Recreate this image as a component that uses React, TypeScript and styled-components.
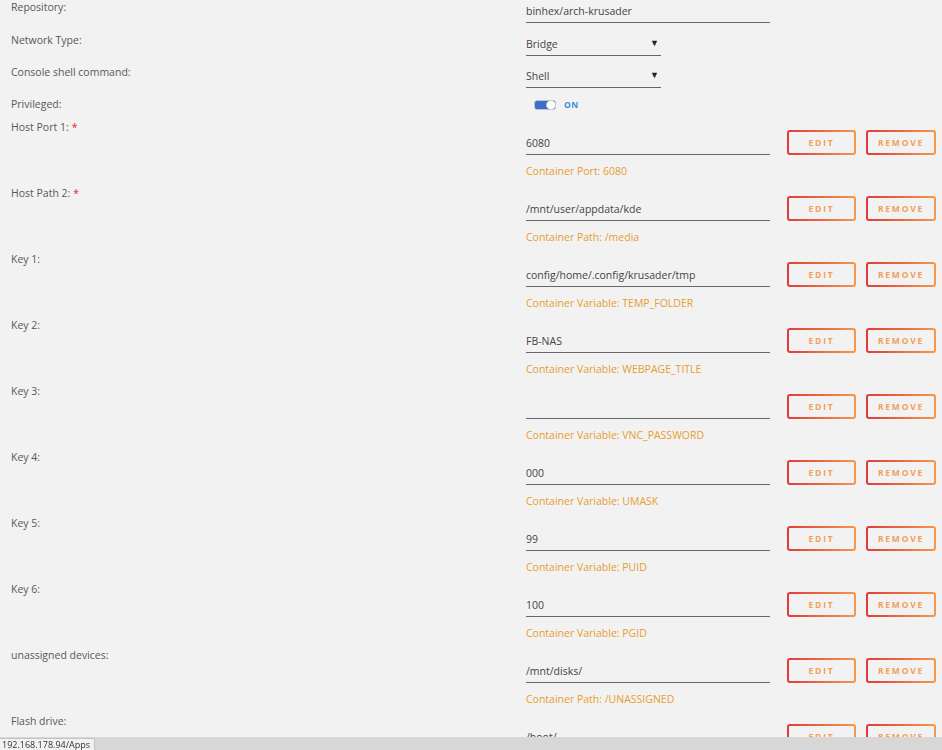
import React from 'react';
import styled, { createGlobalStyle } from 'styled-components';

const GlobalStyle = createGlobalStyle`
    html, body {
        margin: 0;
        padding: 0;
        background: #f2f2f2;
        overflow: hidden;
        height: 750px;
    }
    body {
        font-family: "Open Sans", "Noto Sans", sans-serif;
        color: #4f4f4f;
    }
`;

const Form = styled.div`
    position: relative;
    display: block;
    width: 100%;
    padding: 0 0 0 11px;
    box-sizing: border-box;
`;

const Row = styled.div<{ $height: number }>`
    display: flex;
    flex-direction: row;
    align-items: flex-start;
    height: ${(p) => p.$height}px;
`;

const Label = styled.div`
    width: 515px;
    flex-shrink: 0;
    font-size: 10.5px;
    line-height: 14px;
    color: #585858;

    .req {
        color: #e22828;
        margin-left: 3px;
    }
`;

const Field = styled.div<{ $width: number; $top: number }>`
    width: ${(p) => p.$width}px;
    padding: ${(p) => p.$top}px 0 4px;
    font-size: 10.5px;
    line-height: 14px;
    color: #444;
    border-bottom: 1px solid #666;
    min-height: 14px;
    position: relative;
`;

const Arrow = styled.span`
    position: absolute;
    right: 2px;
    bottom: 5px;
    font-size: 9px;
    color: #222;
`;

const ToggleWrap = styled.div`
    display: flex;
    align-items: center;
    gap: 8px;
    padding: 2px 0 0 8px;
`;

const Switch = styled.div`
    position: relative;
    width: 22px;
    height: 10px;
    border-radius: 3px;
    background: #3f6cc6;
    border: 1px solid #b8c4dc;
    box-sizing: border-box;

    &::after {
        content: '';
        position: absolute;
        right: -1px;
        top: -1px;
        width: 10px;
        height: 10px;
        border-radius: 50%;
        background: #fff;
        border: 1px solid #c8c8c8;
        box-sizing: border-box;
    }
`;

const OnText = styled.span`
    font-size: 8.5px;
    font-weight: 700;
    letter-spacing: 0.5px;
    color: #3a8fd6;
`;

const Value = styled.div`
    display: flex;
    flex-direction: column;
`;

const InputLine = styled.div`
    display: flex;
    flex-direction: row;
    align-items: flex-end;
`;

const Buttons = styled.div`
    display: flex;
    gap: 10px;
    margin-left: 17px;
`;

const Btn = styled.button<{ $width: number }>`
    width: ${(p) => p.$width}px;
    height: 25px;
    padding: 0;
    border: 2px solid transparent;
    border-radius: 3px;
    background:
        linear-gradient(#f2f2f2, #f2f2f2) padding-box,
        linear-gradient(90deg, #e03a3a, #f7984a) border-box;
    color: #f2a059;
    font-family: "Open Sans", sans-serif;
    font-size: 8.5px;
    font-weight: 700;
    letter-spacing: 1.8px;
    text-transform: uppercase;
    box-sizing: border-box;
`;

const Note = styled.div`
    margin-top: 9px;
    font-size: 10.5px;
    line-height: 14px;
    color: #e69d2e;
`;

const StatusBar = styled.div`
    position: fixed;
    left: 0;
    right: 0;
    bottom: 0;
    height: 13px;
    background: #d7d7d7;
`;

const StatusUrl = styled.div`
    position: absolute;
    left: -3px;
    bottom: 0;
    padding: 0 4px;
    height: 11px;
    line-height: 12px;
    font-size: 9px;
    color: #333;
    background: #f2f2f2;
    border: 1px solid #c4c4c4;
    border-bottom: none;
    border-radius: 2px 2px 0 0;
`;

const entries = [
    { label: 'Host Port 1:', req: true, value: '6080', note: 'Container Port: 6080' },
    { label: 'Host Path 2:', req: true, value: '/mnt/user/appdata/kde', note: 'Container Path: /media' },
    { label: 'Key 1:', value: 'config/home/.config/krusader/tmp', note: 'Container Variable: TEMP_FOLDER' },
    { label: 'Key 2:', value: 'FB-NAS', note: 'Container Variable: WEBPAGE_TITLE' },
    { label: 'Key 3:', value: '', note: 'Container Variable: VNC_PASSWORD' },
    { label: 'Key 4:', value: '000', note: 'Container Variable: UMASK' },
    { label: 'Key 5:', value: '99', note: 'Container Variable: PUID' },
    { label: 'Key 6:', value: '100', note: 'Container Variable: PGID' },
    { label: 'unassigned devices:', value: '/mnt/disks/', note: 'Container Path: /UNASSIGNED' },
    { label: 'Flash drive:', value: '/boot/', note: '' },
];

const App = () => {
    return (
        <>
            <GlobalStyle />
            <Form>
                <Row $height={33}>
                    <Label>Repository:</Label>
                    <Field $width={244} $top={4}>binhex/arch-krusader</Field>
                </Row>
                <Row $height={32}>
                    <Label>Network Type:</Label>
                    <Field $width={135} $top={4}>
                        Bridge
                        <Arrow>▼</Arrow>
                    </Field>
                </Row>
                <Row $height={32}>
                    <Label>Console shell command:</Label>
                    <Field $width={135} $top={4}>
                        Shell
                        <Arrow>▼</Arrow>
                    </Field>
                </Row>
                <Row $height={23}>
                    <Label>Privileged:</Label>
                    <ToggleWrap>
                        <Switch />
                        <OnText>ON</OnText>
                    </ToggleWrap>
                </Row>
                {entries.map((e) => (
                    <Row $height={66} key={e.label}>
                        <Label>
                            {e.label}
                            {e.req && <span className="req">*</span>}
                        </Label>
                        <Value>
                            <InputLine>
                                <Field $width={244} $top={16}>{e.value}</Field>
                                <Buttons>
                                    <Btn $width={69}>Edit</Btn>
                                    <Btn $width={70}>Remove</Btn>
                                </Buttons>
                            </InputLine>
                            {e.note && <Note>{e.note}</Note>}
                        </Value>
                    </Row>
                ))}
            </Form>
            <StatusBar>
                <StatusUrl>192.168.178.94/Apps</StatusUrl>
            </StatusBar>
        </>
    );
};

export default App;
